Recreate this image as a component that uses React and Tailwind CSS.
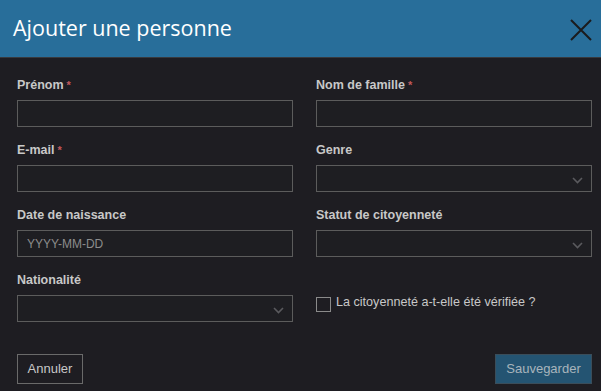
export default function App() {
  const label = "text-[12.5px] font-bold text-[#c8c8c8] leading-4 h-4 mb-[7px]";
  const input = "h-[27px] w-full border border-[#5c5c5c] bg-[#1e1e22]";

  const Chevron = () => (
    <svg width="11" height="7" viewBox="0 0 11 7" className="absolute right-[8px] top-[11px]">
      <polyline points="1,1 5.5,5.5 10,1" fill="none" stroke="#5a5a5e" strokeWidth="1.6" />
    </svg>
  );

  const Req = () => <span className="text-[#c0585a] ml-[3px] text-[11px]">*</span>;

  return (
    <div className="w-[601px] h-[391px] bg-[#1e1d22] overflow-hidden" style={{ fontFamily: '"Liberation Sans", Arial, sans-serif' }}>
      <div className="h-[58px] bg-[#286e9a] border-b border-[#38393d] flex items-center justify-between pl-[13px] pr-[9px]">
        <h1 className="text-[21.5px] text-white pb-[1px]" style={{ fontFamily: '"Open Sans", sans-serif' }}>Ajouter une personne</h1>
        <svg width="22" height="22" viewBox="0 0 22 22" className="mt-[3px]">
          <path d="M1 1 L21 21 M21 1 L1 21" stroke="#1b1b1d" strokeWidth="2" />
        </svg>
      </div>

      <div className="pl-[17px] pr-[9px] pt-[19px]">
        <div className="grid grid-cols-2 gap-x-[23px] gap-y-[15px]">
          <div>
            <div className={label}>Prénom<Req /></div>
            <div className={input}></div>
          </div>
          <div>
            <div className={label}>Nom de famille<Req /></div>
            <div className={input}></div>
          </div>
          <div>
            <div className={label}>E-mail<Req /></div>
            <div className={input}></div>
          </div>
          <div>
            <div className={label}>Genre</div>
            <div className={input + " relative"}><Chevron /></div>
          </div>
          <div>
            <div className={label}>Date de naissance</div>
            <div className={input + " flex items-center pl-[9px] text-[12px] text-[#8c8c8c]"}>YYYY-MM-DD</div>
          </div>
          <div>
            <div className={label}>Statut de citoyenneté</div>
            <div className={input + " relative"}><Chevron /></div>
          </div>
          <div>
            <div className={label}>Nationalité</div>
            <div className={input + " relative"}><Chevron /></div>
          </div>
          <div className="pt-[25px]">
            <div className="flex items-start gap-[5px]">
              <div className="w-[15px] h-[15px] border border-[#8a8a8a]"></div>
              <span className="text-[12.6px] text-[#c8c8c8] leading-[15px] -mt-[2px]">La citoyenneté a-t-elle été vérifiée ?</span>
            </div>
          </div>
        </div>

        <div className="flex justify-between mt-[32px]">
          <button className="h-[30px] w-[66px] border border-[#6a6a6a] text-[13px] text-[#c8c8c8]">Annuler</button>
          <button className="h-[30px] w-[97px] bg-[#245472] border border-[#3a4d5a] text-[13px] text-[#a8b4bc]">Sauvegarder</button>
        </div>
      </div>
    </div>
  );
}
